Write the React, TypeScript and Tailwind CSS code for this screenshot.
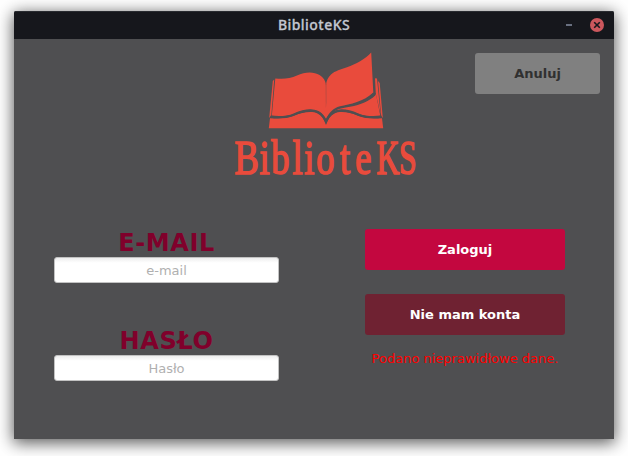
import React from "react";

function Logo() {
  return (
    <svg
      width="190"
      height="132"
      viewBox="231 50 190 132"
      className="block shrink-0 overflow-visible"
      fill="#e94b3c"
      role="img"
      aria-label="BiblioteKS"
    >
      {/* cover base */}
      <path d="M270 118.2 C280 118.8 287 118.5 294 115.7 C303 112 312 110.8 317.5 113.5 C321.5 115.5 324 119.5 326 124 C328 119.5 330.5 115.5 334.5 113.5 C340 110.8 349 112 358 115.7 C365 118.5 372 118.8 382 118.2 L383.2 128.2 H268.8 Z" />
      {/* left page and turning leaf */}
      <path d="M275.3 78.5 C283 78.9 290 79 297 75.6 C305 71.6 314 71.6 319.5 75 C323.5 77.5 325.5 80.5 326 85 C326.4 80.5 328 77.5 331 74.5 C335 70.8 341 69.5 347 67.3 C356 63.8 365 59.5 371.2 52.5 L373.3 92.5 C364 101.5 350 104.2 340 106.3 C333 108 328.5 113.5 326 119 C322.5 112.5 317.5 110 311 109.7 C302 109.3 296 113.5 289.5 115.3 C284 116.7 278 116.4 271.8 115.7 Z" />
      {/* right page under the turning leaf */}
      <path d="M331.5 114.5 C336 108.5 342 107 350 106 C361 103.8 371 99.5 376 94 L380.3 115.7 C373 116.5 367 116.6 360.5 114.4 C352.5 111.5 346 109.7 339.5 110.3 C336 110.7 333.5 112.5 331.5 114.5 Z" />
      <path d="M375 78.2 L377 78.5 L380.7 115.3 L378 103 L375.8 94 Z" />
      <path d="M272.8 81 L274.2 79.5 L271.3 115.3 L269.2 118 Z" />
      <path d="M378 81 L379.7 83 L382.8 118 L381.2 116 Z" />
      <path d="M325.7 84 L326.3 84 L326.3 103 L325.9 108 Z" fill="#984b45" />
      <path d="M332 112 C336 107.8 342 106.6 350 104.7 C361 102.3 368 99 373.2 93 L375.6 93 L375.4 95.3 C369 101.5 361 104.6 350 106.8 C342 108.2 337 109 332 112 Z" fill="#4f4f51" />
      <path d="M270.5 116.7 C280 117.8 287 117.4 294 114.5 C303 110.6 312 109.3 318 112 C322 114 324.4 118 326 122 C327.6 118 330 114 334 112 C340 109.3 349 110.6 358 114.5 C365 117.4 372 117.8 381.5 116.7" fill="none" stroke="#4f4f51" strokeWidth="2.2" />
      <g fontFamily="'Liberation Serif', serif" fontSize="48" stroke="#e94b3c" strokeWidth="1.6">
        <text
          transform="scale(0.76 1)"
          x="308.5 341.5 357 385 400.5 416 447.500 467.500"
          y="174.3"
        >
          Bibliote
        </text>
        <text transform="scale(0.66 1)" x="570.5 604.5" y="174.3">KS</text>
      </g>
    </svg>
  );
}

function Field({ label, placeholder, type }: { label: string; placeholder: string; type: string }) {
  return (
    <label className="flex w-[225px] flex-col items-center">
      <span className="text-[24px] leading-[28px] font-bold tracking-[0.6px] text-[#80002b]">{label}</span>
      <input
        type={type}
        placeholder={placeholder}
        className="h-[26px] w-full rounded-[3px] border border-[#c2c2c2] bg-white bg-linear-to-b from-[#eeeeee] to-white to-20% text-center text-[13px] text-black placeholder:text-[#b0b0b0] outline-none"
      />
    </label>
  );
}

export default function App() {
  return (
    <div className="h-[456px] w-[628px] overflow-hidden bg-white pt-[11px] pl-[14px] font-['DejaVu_Sans',sans-serif]">
      <div className="flex h-[428px] w-[600px] flex-col rounded-t-[2px] bg-[#4f4f51] shadow-[0_3px_16px_1px_rgba(0,0,0,0.65)]">
        <header className="grid h-[28px] shrink-0 grid-cols-[1fr_auto_1fr] items-center rounded-t-[2px] border-t border-[#292b30] bg-[#16171c]">
          <span />
          <h1 className="-mt-px font-['Noto_Sans',sans-serif] text-[14px] leading-[20px] font-medium tracking-[0.45px] text-[#c3c7d1] [-webkit-text-stroke:0.3px_#c3c7d1]">
            BiblioteKS
          </h1>
          <div className="flex items-center justify-end gap-[18px] pr-[10px]">
            <button aria-label="Minimalizuj" className="-mt-[2px] h-[2px] w-[6px] bg-[#697080]" />
            <button aria-label="Zamknij" className="-mt-px block size-[14px]">
              <svg viewBox="0 0 14 14" className="block size-full">
                <circle cx="7" cy="7" r="7" fill="#cc575d" />
                <path d="M4.2 4.2 L9.8 9.8 M9.8 4.2 L4.2 9.8" stroke="#16171c" strokeWidth="1.6" />
              </svg>
            </button>
          </div>
        </header>
        <main className="flex flex-1 flex-col">
          <div className="grid h-[190px] grid-cols-[217px_190px_1fr] pt-[11px]">
            <span />
            <Logo />
            <button className="mt-[3px] mr-[14px] h-[41px] w-[125px] justify-self-end rounded-[3px] bg-[#808080] text-[13px] font-bold text-[#303030]">
              Anuluj
            </button>
          </div>
          <div className="flex justify-between pr-[49px] pl-[40px]">
            <form className="flex flex-col gap-[44px]">
              <Field label="E-MAIL" placeholder="e-mail" type="email" />
              <Field label="HASŁO" placeholder="Hasło" type="password" />
            </form>
            <div className="flex w-[200px] flex-col">
              <button className="h-[41px] rounded-[3px] bg-[#c3073f] text-[13px] font-bold text-white">Zaloguj</button>
              <button className="mt-[24px] h-[41px] rounded-[3px] bg-[#6f2232] text-[13px] font-bold text-white">Nie mam konta</button>
              <p className="mt-[15px] text-center text-[13px] leading-[18px] text-[#ff0000]">Podano nieprawidłowe dane.</p>
            </div>
          </div>
        </main>
      </div>
    </div>
  );
}
